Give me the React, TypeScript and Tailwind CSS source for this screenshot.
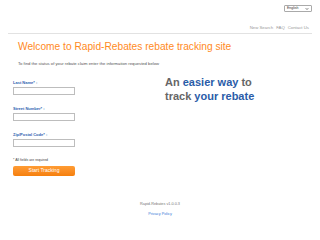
import { ChevronDown } from 'lucide-react';

const fields = ['Last Name', 'Street Number', 'Zip/Postal Code'];

function TrackingField({ label }: { label: string }) {
  return (
    <div className="flex flex-col">
      <label className="text-[4px] leading-[5px] font-bold text-[#2d5fb0]">{label}* :</label>
      <input className="mt-[2px] h-[8px] w-[62px] border border-[#bdbdbd] bg-white" />
    </div>
  );
}

export default function App() {
  return (
    <div className="h-[240px] w-[320px] bg-white font-['Liberation_Sans',Arial,sans-serif]">
      <div className="mx-[8px] flex flex-col">
        <div className="flex justify-end pt-[5px]">
          <div className="flex h-[7px] w-[28px] items-center justify-between rounded-[1px] border border-[#aaaaaa] px-[2px] text-[3.5px] text-[#333]">
            <span>English</span>
            <ChevronDown className="h-[4px] w-[4px]" strokeWidth={4} />
          </div>
        </div>
        <div className="mt-[13px] flex justify-end gap-[3px] pr-[3px] text-[4.3px] leading-[5px] text-[#999]">
          <span>New Search</span>
          <span>FAQ</span>
          <span>Contact Us</span>
        </div>
        <div className="mt-[3px] h-[1px] bg-[#e2e2e2]" />

        <h1 className="mt-[7px] pl-[10px] text-[10.2px] leading-[12px] text-[#ff8a1e]">
          Welcome to Rapid-Rebates rebate tracking site
        </h1>
        <p className="mt-[8px] pl-[10px] text-[4.2px] leading-[5px] text-[#555]">
          To find the status of your rebate claim enter the information requested below
        </p>

        <div className="mt-[9px] flex pl-[5px]">
          <div className="flex w-[152px] flex-col gap-[11px] pt-[5px]">
            {fields.map((f) => (
              <TrackingField key={f} label={f} />
            ))}
            <div className="flex flex-col">
              <span className="text-[3.5px] leading-[5px] text-[#444]">* All fields are required</span>
              <button className="mt-[3px] h-[10px] w-[62px] rounded-[2px] bg-gradient-to-b from-[#ff9c33] to-[#f57f0a] text-[5px] text-white">
                Start Tracking
              </button>
            </div>
          </div>
          <div className="text-[11px] leading-[14px] font-bold text-[#666]">
            An <span className="text-[#2a5ca8]">easier way</span> to
            <br />
            track <span className="text-[#2a5ca8]">your rebate</span>
          </div>
        </div>

        <div className="mt-[26px] flex flex-col items-center gap-[5px] text-[3.8px] leading-[5px]">
          <span className="text-[#777]">Rapid-Rebates v1.0.0.3</span>
          <span className="text-[#3b7dd8]">Privacy Policy</span>
        </div>
      </div>
    </div>
  );
}
